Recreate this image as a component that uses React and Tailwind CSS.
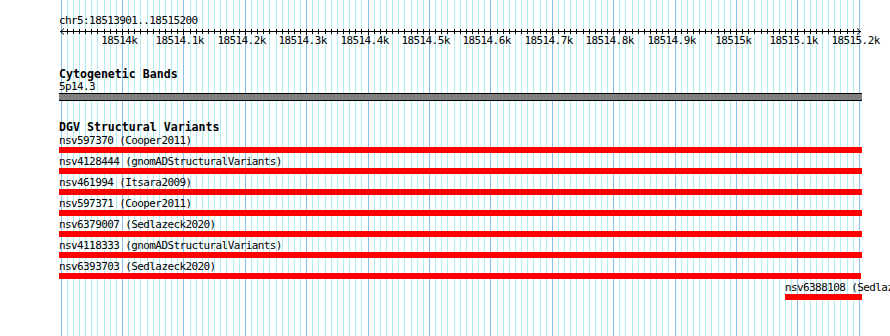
import React from "react";

const MINOR = "#b0eef4";
const MAJOR = "#88c0ec";

function tickX(i) {
  return Math.round(60.6 + i * 6.14);
}

function Grid() {
  const lines = [];
  for (let i = 0; i <= 130; i++) {
    const x = tickX(i) + 0.5;
    lines.push(
      <line key={i} x1={x} x2={x} y1={0} y2={336} stroke={i % 10 === 0 ? MAJOR : MINOR} strokeWidth={1} />
    );
  }
  return (
    <svg className="absolute left-0 top-0" width={890} height={336}>
      {lines}
    </svg>
  );
}

const LABELS = {
  10: "18514k",
  20: "18514.1k",
  30: "18514.2k",
  40: "18514.3k",
  50: "18514.4k",
  60: "18514.5k",
  70: "18514.6k",
  80: "18514.7k",
  90: "18514.8k",
  100: "18514.9k",
  110: "18515k",
  120: "18515.1k",
  130: "18515.2k",
};

function Ruler() {
  const ticks = [];
  for (let i = 1; i < 130; i++) {
    const x = tickX(i) + 0.5;
    const major = i % 10 === 0;
    ticks.push(<line key={i} x1={x} x2={x} y1={2} y2={major ? 8 : 7} stroke="#000" strokeWidth={1} />);
  }
  const texts = Object.entries(LABELS).map(([i, t]) => (
    <text
      key={i}
      x={tickX(Number(i)) - 1 - t.length * 0.3}
      y={17}
      textAnchor="middle"
      fontFamily="'DejaVu Sans Mono', monospace"
      fontSize={11}
      letterSpacing={-0.6}
      fill="#000"
    >
      {t}
    </text>
  ));
  return (
    <svg width={890} height={20} className="block">
      <line x1={60} x2={861} y1={4.5} y2={4.5} stroke="#000" strokeWidth={1} />
      <polyline points="64,1.5 60.5,4.5 64,7.5" fill="none" stroke="#000" strokeWidth={1} />
      <polyline points="857,1.5 860.5,4.5 857,7.5" fill="none" stroke="#000" strokeWidth={1} />
      {ticks}
      {texts}
    </svg>
  );
}

const ROWS = [
  { label: "nsv597370 (Cooper2011)", w: 803, ml: 0 },
  { label: "nsv4128444 (gnomADStructuralVariants)", w: 803, ml: 0 },
  { label: "nsv461994 (Itsara2009)", w: 803, ml: 0 },
  { label: "nsv597371 (Cooper2011)", w: 803, ml: 0 },
  { label: "nsv6379007 (Sedlazeck2020)", w: 803, ml: 0 },
  { label: "nsv4118333 (gnomADStructuralVariants)", w: 803, ml: 0 },
  { label: "nsv6393703 (Sedlazeck2020)", w: 802, ml: 0 },
  { label: "nsv6388108 (Sedlazeck2020)", w: 77, ml: 726 },
];

export default function App() {
  return (
    <div className="relative w-[890px] h-[336px] overflow-hidden bg-white text-black font-['DejaVu_Sans_Mono',monospace]">
      <Grid />
      <div className="relative flex flex-col pt-[15px]">
        <div className="pl-[59px] h-[12px] leading-[12px] text-[11px] tracking-[-0.6px] whitespace-nowrap">
          chr5:18513901..18515200
        </div>
        <Ruler />
        <div className="mt-[21px] pl-[59px] h-[13px] leading-[13px] text-[11.6px] font-bold whitespace-nowrap">
          Cytogenetic Bands
        </div>
        <div className="pl-[59px] h-[12px] leading-[12px] text-[11px] tracking-[-0.6px]">5p14.3</div>
        <div className="ml-[59px] w-[803px] h-[8px] bg-[#808080] border-y border-black" />
        <div className="mt-[20px] pl-[59px] h-[13px] leading-[13px] text-[11.6px] font-bold whitespace-nowrap">
          DGV Structural Variants
        </div>
        <div className="mt-[1px] pl-[59px] flex flex-col gap-[3px]">
          {ROWS.map((r, idx) => (
            <div key={idx} className="flex flex-col" style={{ marginLeft: r.ml }}>
              <div className="h-[12px] leading-[12px] text-[11px] tracking-[-0.6px] whitespace-nowrap">{r.label}</div>
              <div className="h-[6px] bg-[#ff0000]" style={{ width: r.w }} />
            </div>
          ))}
        </div>
      </div>
    </div>
  );
}
